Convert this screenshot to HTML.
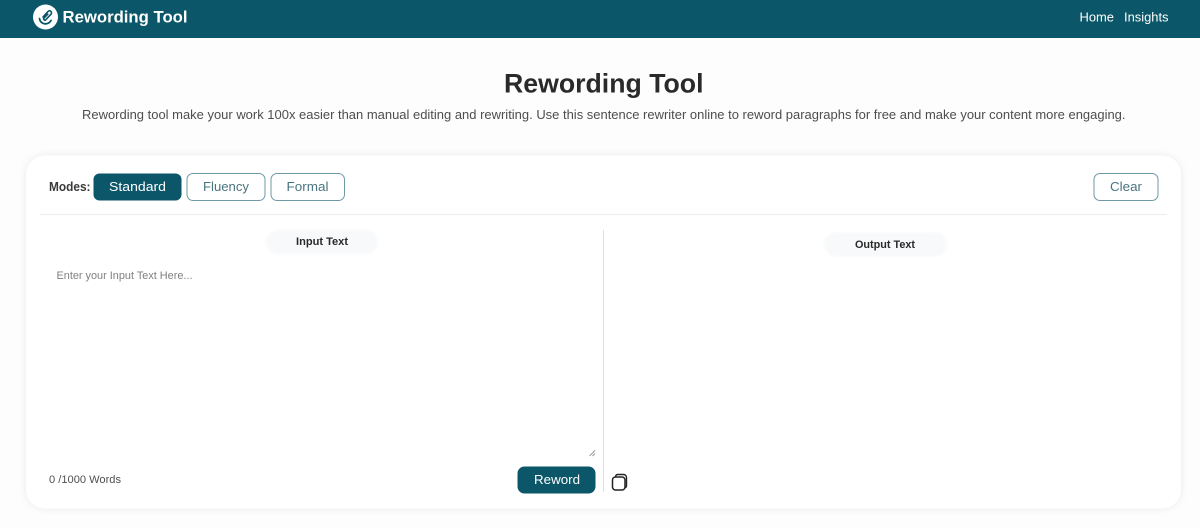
<!DOCTYPE html>
<html lang="en">
<head>
<meta charset="utf-8">
<title>Rewording Tool</title>
<style>
html,body{margin:0;padding:0;width:1200px;height:528px;overflow:hidden;background:#fdfdfd}
svg{display:block;position:absolute;left:0;top:0}
text{font-family:"Liberation Sans",sans-serif}
</style>
</head>
<body>
<svg width="1200" height="528" viewBox="0 0 1200 528" xmlns="http://www.w3.org/2000/svg">
<defs>
<filter id="s" x="-5%" y="-5%" width="110%" height="110%"><feDropShadow dx="0" dy="0" stdDeviation="4" flood-color="#000" flood-opacity="0.08"/></filter>
<filter id="b" x="-10%" y="-30%" width="120%" height="160%"><feGaussianBlur stdDeviation="1.200"/></filter>
</defs>
<rect width="1200" height="528" fill="#fdfdfd"/>
<rect width="1200" height="38" fill="#0b5668"/>
<circle cx="45.500" cy="17" r="12.500" fill="#fff"/>
<path d="M43 17l5-5.500a2 2 0 0 1 3 2.700l-5.200 5.500a1.200 1.200 0 0 1-1.800-1.600l3.800-4" fill="none" stroke="#0b5668" stroke-width="1.600" stroke-linecap="round"/>
<path d="M39.500 18.500a6 5.500 0 0 0 11.500 2" fill="none" stroke="#0b5668" stroke-width="1.800" stroke-linecap="round"/>
<text x="62.500" y="22.500" font-size="17" font-weight="700" fill="#fff" textLength="125" lengthAdjust="spacingAndGlyphs">Rewording Tool</text>
<text x="1079.500" y="21.500" font-size="13" fill="#fff" textLength="34.500" lengthAdjust="spacingAndGlyphs">Home</text>
<text x="1124" y="21.500" font-size="13" fill="#fff" textLength="44.500" lengthAdjust="spacingAndGlyphs">Insights</text>

<text x="504" y="92.500" font-size="26.500" font-weight="700" fill="#2a2a2a" textLength="199.500" lengthAdjust="spacingAndGlyphs">Rewording Tool</text>
<text x="82" y="119" font-size="13" fill="#4d4d4d" textLength="1043.500" lengthAdjust="spacingAndGlyphs">Rewording tool make your work 100x easier than manual editing and rewriting. Use this sentence rewriter online to reword paragraphs for free and make your content more engaging.</text>

<rect x="26" y="155.500" width="1155" height="353" rx="19" fill="#fff" filter="url(#s)"/>
<text x="49" y="191" font-size="12.500" font-weight="700" fill="#3a3a3a" textLength="41.500" lengthAdjust="spacingAndGlyphs">Modes:</text>
<rect x="93.500" y="173.500" width="88" height="27" rx="6" fill="#0b5668"/>
<text x="109" y="191" font-size="13" fill="#fff" textLength="57" lengthAdjust="spacingAndGlyphs">Standard</text>
<rect x="187" y="173.500" width="78" height="27" rx="6" fill="#fff" stroke="#0b5668" stroke-opacity=".6"/>
<text x="203" y="191" font-size="13" fill="#4a7480" textLength="46" lengthAdjust="spacingAndGlyphs">Fluency</text>
<rect x="271" y="173.500" width="73.500" height="27" rx="6" fill="#fff" stroke="#0b5668" stroke-opacity=".6"/>
<text x="286.500" y="191" font-size="13" fill="#4a7480" textLength="42" lengthAdjust="spacingAndGlyphs">Formal</text>
<rect x="1094" y="173.500" width="64" height="27" rx="6" fill="#fff" stroke="#0b5668" stroke-opacity=".6"/>
<text x="1110" y="191" font-size="13" fill="#4a7480" textLength="32" lengthAdjust="spacingAndGlyphs">Clear</text>
<rect x="40" y="214" width="1127" height="1" fill="#ececec"/>
<rect x="603" y="230" width="1" height="262" fill="#e0e0e0"/>

<rect x="266" y="230" width="112" height="24" rx="12" fill="#f8f9fa" filter="url(#b)"/>
<text x="296" y="245" font-size="11" font-weight="700" fill="#2a2a2a" textLength="52" lengthAdjust="spacingAndGlyphs">Input Text</text>
<rect x="824" y="232.500" width="123" height="24" rx="12" fill="#f8f9fa" filter="url(#b)"/>
<text x="855" y="248" font-size="11" font-weight="700" fill="#2a2a2a" textLength="60" lengthAdjust="spacingAndGlyphs">Output Text</text>
<text x="56.500" y="279" font-size="11" fill="#808080" textLength="136" lengthAdjust="spacingAndGlyphs">Enter your Input Text Here...</text>
<path d="M589.500 456l5.500-5.500M592.500 456l2.500-2.500" stroke="#999" stroke-width="1" fill="none"/>
<text x="49" y="483" font-size="11" fill="#505050" textLength="72" lengthAdjust="spacingAndGlyphs">0 /1000 Words</text>
<rect x="517.500" y="466.500" width="78" height="27" rx="7" fill="#0b5668"/>
<text x="534" y="484" font-size="13" fill="#fff" textLength="46" lengthAdjust="spacingAndGlyphs">Reword</text>
<path d="M615.500 476.500a2.500 2.500 0 0 1 2.500-2h5.500a3 3 0 0 1 3 3v8a2.500 2.500 0 0 1-1.800 2.400" fill="none" stroke="#222" stroke-width="1.400"/>
<rect x="612.500" y="477" width="12.500" height="13" rx="3" fill="#fff" stroke="#222" stroke-width="1.500"/>
</svg>
</body>
</html>
